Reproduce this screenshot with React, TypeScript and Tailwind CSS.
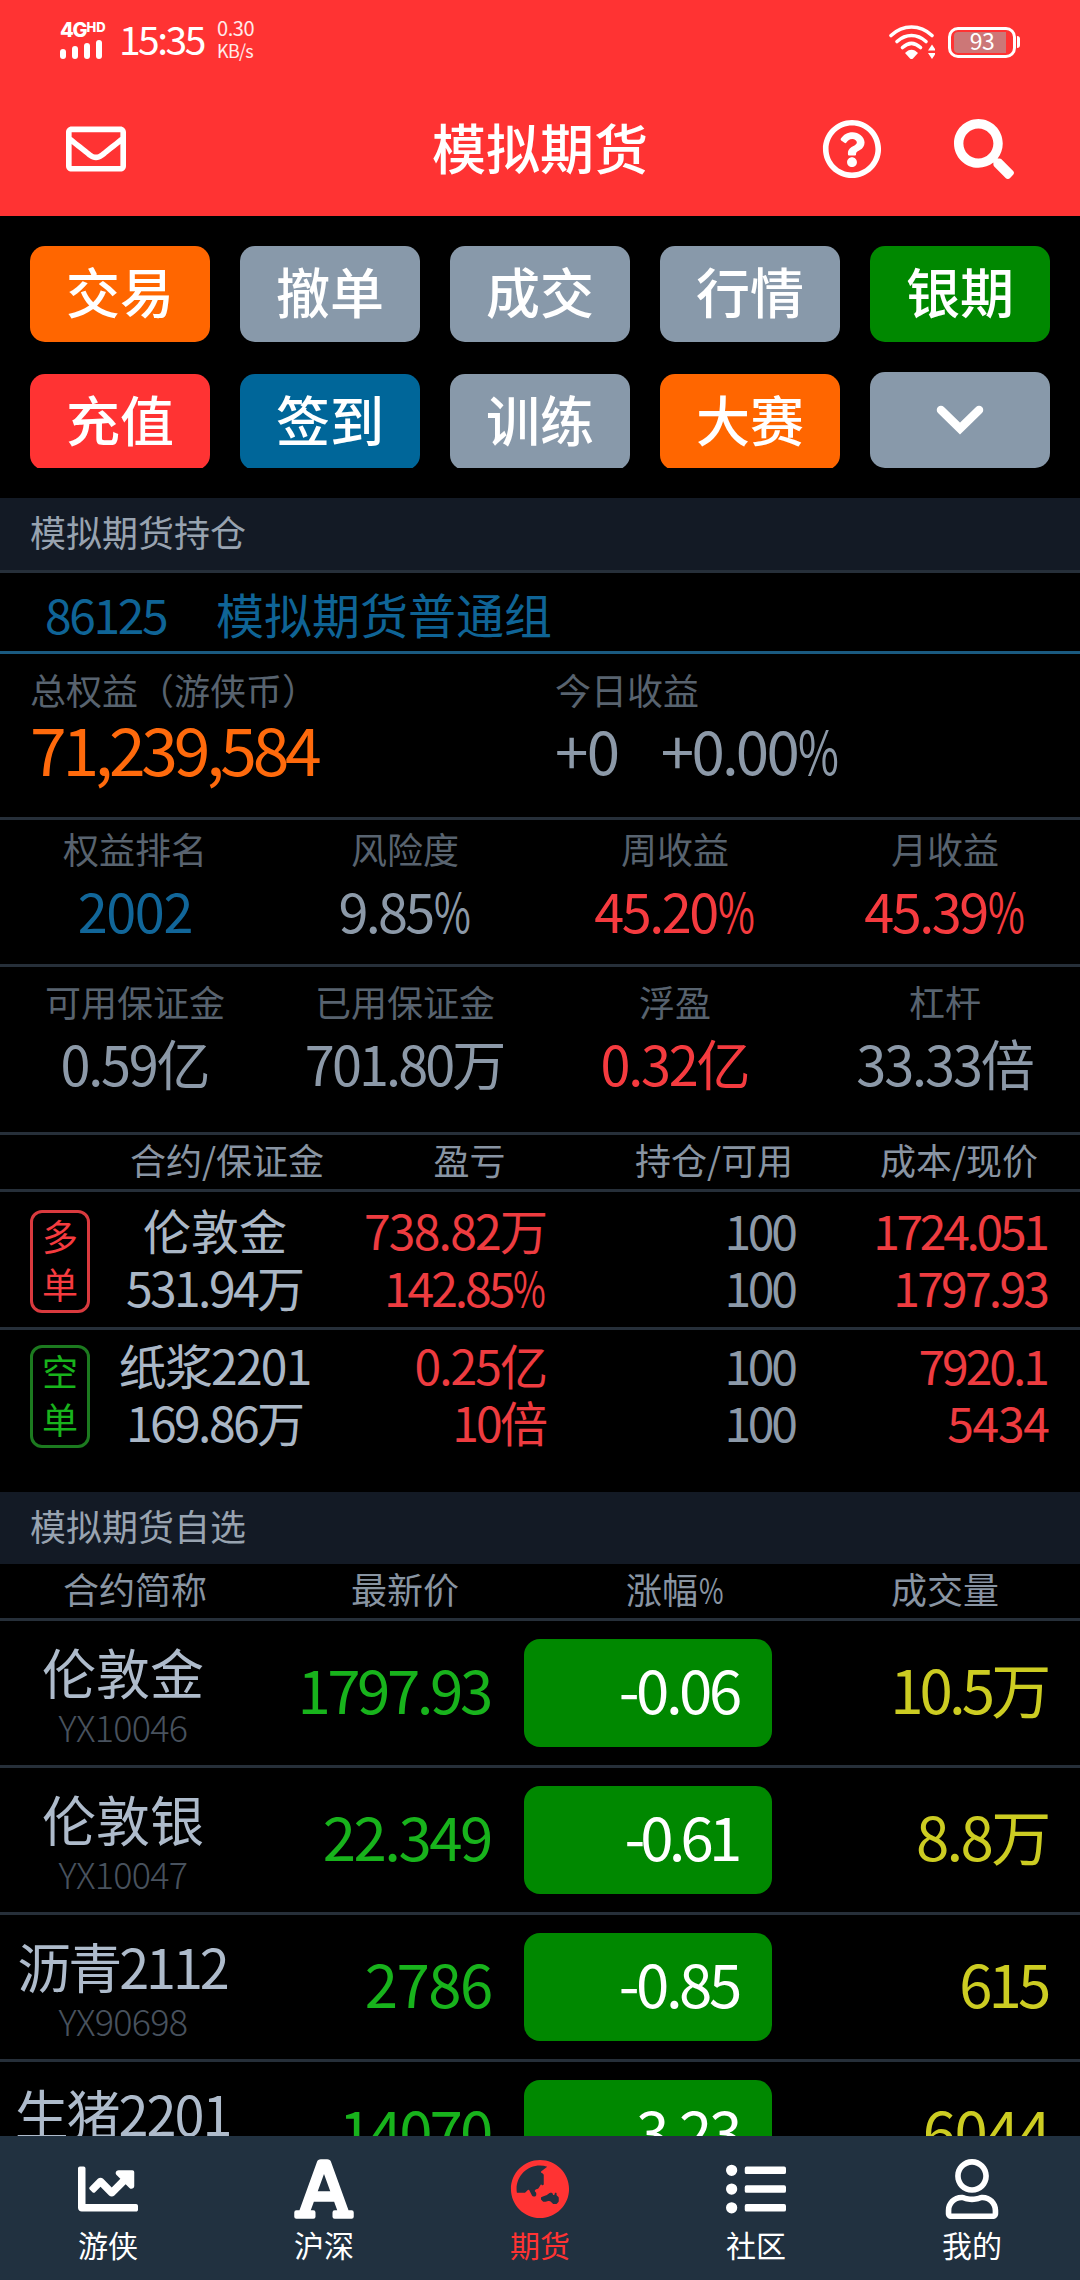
import {
  FaChartLine,
  FaFont,
  FaGlobeAsia,
  FaListUl,
  FaRegEnvelope,
  FaRegQuestionCircle,
  FaRegUser,
  FaSearch,
} from 'react-icons/fa';

const actions = [
  { label: '交易', color: 'bg-[#ff6600]' },
  { label: '撤单', color: 'bg-[#8899aa]' },
  { label: '成交', color: 'bg-[#8899aa]' },
  { label: '行情', color: 'bg-[#8899aa]' },
  { label: '银期', color: 'bg-[#008800]' },
  { label: '充值', color: 'bg-[#ff3333]' },
  { label: '签到', color: 'bg-[#006699]' },
  { label: '训练', color: 'bg-[#8899aa]' },
  { label: '大赛', color: 'bg-[#ff6600]' },
];

const returns = [
  { label: '权益排名', value: '2002', color: 'text-[#116699]' },
  { label: '风险度', value: '9.85%', color: 'text-[#8c99a8]' },
  { label: '周收益', value: '45.20%', color: 'text-[#f53b3f]' },
  { label: '月收益', value: '45.39%', color: 'text-[#f53b3f]' },
];

const margins = [
  { label: '可用保证金', value: '0.59亿', color: 'text-[#8c99a8]' },
  { label: '已用保证金', value: '701.80万', color: 'text-[#8c99a8]' },
  { label: '浮盈', value: '0.32亿', color: 'text-[#f53b3f]' },
  { label: '杠杆', value: '33.33倍', color: 'text-[#8c99a8]' },
];

const positions = [
  {
    side: ['多', '单'],
    sideColor: 'border-[#d93a3e] text-[#f53b3f]',
    name: '伦敦金',
    margin: '531.94万',
    profit: ['738.82万', '142.85%'],
    qty: ['100', '100'],
    price: ['1724.051', '1797.93'],
  },
  {
    side: ['空', '单'],
    sideColor: 'border-[#1c7a1f] text-[#18b31c]',
    name: '纸浆2201',
    margin: '169.86万',
    profit: ['0.25亿', '10倍'],
    qty: ['100', '100'],
    price: ['7920.1', '5434'],
  },
];

const quotes = [
  { name: '伦敦金', code: 'YX10046', price: '1797.93', change: '-0.06', volume: '10.5万' },
  { name: '伦敦银', code: 'YX10047', price: '22.349', change: '-0.61', volume: '8.8万' },
  { name: '沥青2112', code: 'YX90698', price: '2786', change: '-0.85', volume: '615' },
  { name: '生猪2201', code: 'YX90752', price: '14070', change: '-3.23', volume: '6044' },
];

const tabs = [
  { label: '游侠', Icon: FaChartLine, size: 60 },
  { label: '沪深', Icon: FaFont, size: 68 },
  { label: '期货', Icon: FaGlobeAsia, size: 60, active: true },
  { label: '社区', Icon: FaListUl, size: 60 },
  { label: '我的', Icon: FaRegUser, size: 60 },
];

// how much tighter each glyph should run, in em
const tighten: Record<string, number> = { '1': 0.12, '.': 0.1, ',': 0.13, '-': 0.06 };

function Num({ value, className = '' }: { value: string; className?: string }) {
  const percent = value.endsWith('%');
  const chars = [...value.replace('%', '')];
  const excess = chars.reduce(
    (sum, c) => sum + (c.charCodeAt(0) > 255 ? 0 : 0.026 + (tighten[c] ?? 0)),
    0
  );
  const spacing = excess / chars.length;
  return (
    <span
      className={className}
      style={{
        letterSpacing: `${-spacing}em`,
        paddingRight: percent ? 0 : `${Math.max(spacing - 0.02, 0)}em`,
      }}
    >
      {chars.join('')}
      {percent && (
        <span className="-mr-[0.22em] ml-[0.02em] inline-block origin-left scale-x-[0.74] tracking-normal">
          %
        </span>
      )}
    </span>
  );
}

function StatusBar() {
  return (
    <div className="flex h-[81px] items-start pl-[60px] pr-[60px]">
      <div className="w-[46px] pt-[22px]">
        <div className="flex h-4 items-start font-['Inter'] font-extrabold leading-none">
          <span className="text-[20px] leading-4 tracking-[-0.06em]">4G</span>
          <span className="text-[13px] leading-[10px]">HD</span>
        </div>
        <div className="mt-0.5 flex h-[19px] items-end gap-1.5">
          <i className="h-[10px] w-1.5 rounded-sm bg-white" />
          <i className="h-[13px] w-1.5 rounded-sm bg-white" />
          <i className="h-[16px] w-1.5 rounded-sm bg-white" />
          <i className="h-[19px] w-1.5 rounded-sm bg-white" />
        </div>
      </div>
      <span className="ml-[13px] w-[98px] pt-[17px] text-[39px] leading-[42px] tracking-[-0.065em]">
        15:35
      </span>
      <div className="flex flex-col pt-[16px] text-[20px] leading-[23px] tracking-[-0.02em] text-white/90">
        <span>0.30</span>
        <span className="text-[18px] tracking-[-0.04em]">KB/s</span>
      </div>
      <div className="ml-auto flex items-center gap-[13px] pt-[25px]">
        <svg className="h-[34px] w-[46px]" viewBox="0 0 46 34" fill="none">
          <g stroke="#fff" strokeWidth="3.6" strokeLinecap="round">
            <path d="M2 10.5C14-.8 31-.8 43 10.5" />
            <path d="M8 16.5C17 8.5 28 8.5 37 16.5" />
            <path d="M13.5 22.5C19.5 17 25.5 17 31.5 22.5" />
          </g>
          <path d="M16 28c4-4.500 9-4.500 13 0l-5 5.500q-1.500 1-3 0z" fill="#fff" />
          <path d="M39 25.500l4-6 4 6zM39 28l4 6 4-6z" fill="#fff" />
        </svg>
        <div className="flex items-center gap-px">
          <div className="flex h-[31px] w-[68px] items-center rounded-[10px] border-[3px] border-white p-[3px]">
            <span className="flex h-[21px] w-[52px] items-center justify-center rounded-l-[4px] bg-[#cc7777] text-[23px] leading-none tracking-[-0.02em]">
              <b className="-mt-[3px] ml-1 font-normal">93</b>
            </span>
          </div>
          <i className="h-3 w-[3px] rounded-r-full bg-white" />
        </div>
      </div>
    </div>
  );
}

function Header() {
  return (
    <header className="h-[216px] bg-[#ff3333] text-white">
      <StatusBar />
      <div className="flex h-[135px] items-center px-[66px]">
        <FaRegEnvelope size={60} />
        <h1 className="ml-[306px] flex-1 pb-[4px] text-[54px] font-medium leading-none">模拟期货</h1>
        <FaRegQuestionCircle size={60} className="mr-[72px]" />
        <FaSearch size={60} />
      </div>
    </header>
  );
}

function SectionTitle({ title }: { title: string }) {
  return (
    <h2 className="h-[72px] bg-[#131a25] pl-[30px] pt-[14px] text-[36px] leading-[39px] text-[#98a3b0]">
      {title}
    </h2>
  );
}

function Stats({ items }: { items: typeof returns }) {
  return (
    <div className="grid grid-cols-4 text-center">
      {items.map((item) => (
        <div key={item.label} className="flex flex-col">
          <span className="text-[36px] leading-[40px] text-[#58636f]">{item.label}</span>
          <Num
            value={item.value}
            className={`mt-[14px] text-[54px] leading-[56px] ${item.color}`}
          />
        </div>
      ))}
    </div>
  );
}

function Positions() {
  return (
    <>
      <div className="flex h-[57px] border-b-[3px] border-[#262f39] pl-[105px] pt-[4px] text-center text-[36px] leading-[41px] text-[#8894a2]">
        <span className="w-[244px]">合约/保证金</span>
        <span className="w-[241px]">盈亏</span>
        <span className="w-[248px]">持仓/可用</span>
        <span className="w-[242px]">成本/现价</span>
      </div>
      {positions.map((p, i) => (
        <div
          key={p.name}
          className={`flex pl-[30px] text-[48px] leading-[57px] ${
            i === 0 ? 'h-[138px] border-b-[3px] border-[#262f39] pt-[9px]' : 'h-[162px] pt-[6px]'
          }`}
        >
          <div
            className={`mt-[9px] flex h-[103px] w-[60px] flex-col items-center rounded-[12px] border-[3px] text-[36px] leading-[48px] ${p.sideColor}`}
          >
            <span className="-mt-0.5">{p.side[0]}</span>
            <span>{p.side[1]}</span>
          </div>
          <div className="flex w-[250px] flex-col text-center text-[#aab7c6]">
            <Num value={p.name} />
            <Num value={p.margin} />
          </div>
          <div className="flex w-[207px] flex-col text-right text-[#ee3c40]">
            <Num value={p.profit[0]} />
            <Num value={p.profit[1]} />
          </div>
          <div className="flex w-[250px] flex-col text-right text-[#8c99a8]">
            <Num value={p.qty[0]} />
            <Num value={p.qty[1]} />
          </div>
          <div className="flex w-[252px] flex-col text-right text-[#ee3c40]">
            <Num value={p.price[0]} />
            <Num value={p.price[1]} />
          </div>
        </div>
      ))}
    </>
  );
}

function Quotes() {
  return (
    <>
      <div className="grid h-[57px] grid-cols-4 border-b-[3px] border-[#262f39] pt-[4px] text-center text-[36px] leading-[40px] text-[#8894a2]">
        <span>合约简称</span>
        <span>最新价</span>
        <Num value="涨幅%" />
        <span>成交量</span>
      </div>
      {quotes.map((q) => (
        <div
          key={q.code}
          className="flex h-[147px] items-center border-b-[3px] border-[#262f39] text-[60px] leading-none"
        >
          <div className="flex w-[246px] shrink-0 flex-col pt-[8px] text-center">
            <Num value={q.name} className="text-[54px] leading-[58px] text-[#aebbcb]" />
            <span className="text-[36px] font-light leading-[50px] tracking-[-0.02em] text-[#48525e]">
              {q.code}
            </span>
          </div>
          <div className="w-[246px] pb-[11px] text-right text-[#18b31c]">
            <Num value={q.price} />
          </div>
          <div className="ml-[32px] h-[108px] w-[248px] rounded-[16px] bg-[#008800] pr-[31px] pt-[19px] text-right text-white">
            <Num value={q.change} />
          </div>
          <div className="flex-1 pb-[11px] pr-[30px] text-right text-[#cccc22]">
            <Num value={q.volume} />
          </div>
        </div>
      ))}
    </>
  );
}

export default function App() {
  return (
    <div className="flex h-[2280px] w-[1080px] flex-col overflow-hidden bg-black font-['Noto_Sans_CJK_SC',sans-serif]">
      <Header />
      <main className="min-h-0 flex-1 overflow-hidden">
        <div className="px-[30px] py-[30px]">
          <div className="grid h-[222px] grid-cols-5 gap-x-[30px] gap-y-8 overflow-hidden text-center text-[54px] font-medium leading-[90px] text-white">
            {actions.map((a) => (
              <button key={a.label} className={`h-24 rounded-[15px] pb-1.5 ${a.color}`}>
                {a.label}
              </button>
            ))}
            <button className="-mt-0.5 flex h-24 items-center justify-center rounded-[15px] bg-[#8899aa]">
              <svg width="48" height="30" viewBox="0 0 48 30" fill="none">
                <path d="M5 5l19 18.500L43 5" stroke="#fff" strokeWidth="8.5" strokeLinecap="round" />
              </svg>
            </button>
          </div>
        </div>

        <SectionTitle title="模拟期货持仓" />
        <div className="flex h-[84px] border-b-[3px] border-t-[3px] border-[#262f39] border-b-[#1a5a80] pl-[45px] pt-[12px] text-[48px] leading-[57px] text-[#0f6496]">
          <div className="w-[171px]">
            <Num value="86125" />
          </div>
          <span>模拟期货普通组</span>
        </div>

        <div className="flex h-[166px] border-b-[3px] border-[#262f39] pl-[30px] pt-[14px]">
          <div className="flex w-[525px] flex-col">
            <span className="text-[36px] leading-[42px] text-[#58636f]">总权益（游侠币）</span>
            <Num value="71,239,584" className="mt-[4px] text-[66px] leading-[66px] text-[#ff6a0c]" />
          </div>
          <div className="flex flex-col">
            <span className="text-[36px] leading-[42px] text-[#58636f]">今日收益</span>
            <div className="mt-[4px] flex gap-[42px] text-[60px] leading-[70px] text-[#8c99a8]">
              <Num value="+0" />
              <Num value="+0.00%" />
            </div>
          </div>
        </div>
        <div className="h-[147px] border-b-[3px] border-[#262f39] pt-[8px]">
          <Stats items={returns} />
        </div>
        <div className="h-[168px] border-b-[3px] border-[#262f39] pt-[14px]">
          <Stats items={margins} />
        </div>
        <Positions />

        <SectionTitle title="模拟期货自选" />
        <Quotes />
      </main>

      <nav className="grid h-36 shrink-0 grid-cols-5 bg-[#213140] text-white">
        {tabs.map(({ label, Icon, size, active }) => (
          <div key={label} className={`flex flex-col items-center ${active ? 'text-[#ff3333]' : ''}`}>
            <div className="mt-[15px] flex h-[76px] items-center">
              <Icon size={size} />
            </div>
            <span className="text-[30px] leading-[34px]">{label}</span>
          </div>
        ))}
      </nav>
    </div>
  );
}
